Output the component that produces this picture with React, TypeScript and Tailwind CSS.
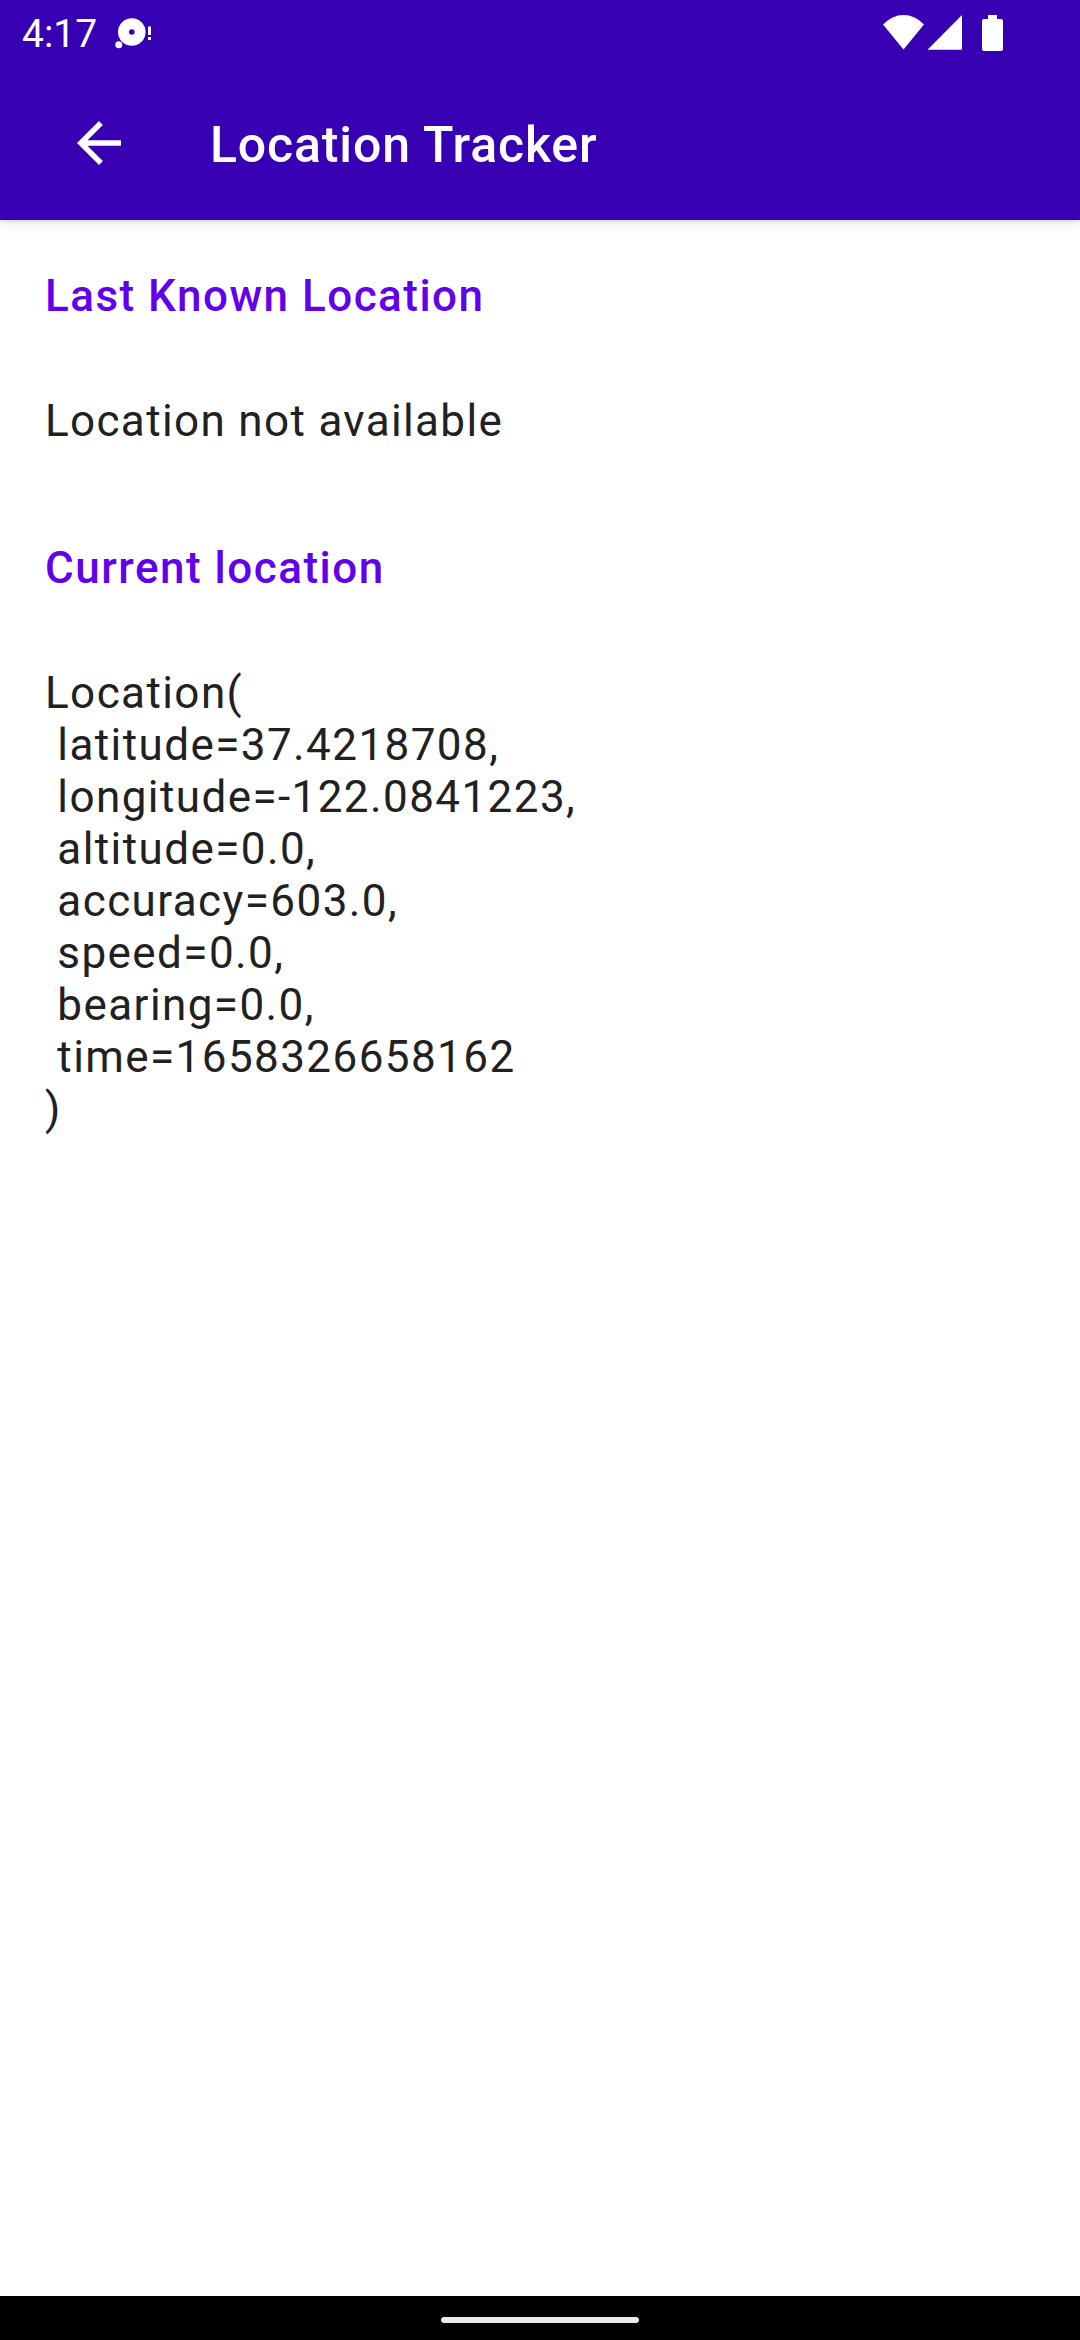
function StatusBar() {
  return (
    <div className="flex h-[66px] items-center justify-between pl-[22px] pr-[77px]">
      <div className="flex items-center">
        <span className="w-[92px] pt-[3px] text-[39px] leading-[63px]">4:17</span>
        <svg width="38" height="66" viewBox="114 0 38 66" fill="currentColor">
          <circle cx="131.8" cy="32" r="8.3" fill="none" stroke="currentColor" strokeWidth="11" />
          <circle cx="118.8" cy="44.7" r="3.5" />
          <path d="M148 26.500h3v8.500h-3zM148 37h3v3h-3z" />
        </svg>
      </div>
      <svg width="120" height="66" viewBox="883 0 120 66" fill="currentColor">
        <path d="M903.500 49.500L883 24.500Q892 15 903.500 15T924 24.500z" />
        <path d="M927.500 49.700L962 15V49.700z" />
        <path d="M988 15h9v4h4a2 2 0 0 1 2 2v28a2 2 0 0 1-2 2h-17a2 2 0 0 1-2-2V21a2 2 0 0 1 2-2h4z" />
      </svg>
    </div>
  );
}

const currentLocation = `Location(
 latitude=37.4218708,
 longitude=-122.0841223,
 altitude=0.0,
 accuracy=603.0,
 speed=0.0,
 bearing=0.0,
 time=1658326658162
)`;

export default function App() {
  return (
    <div className="flex h-[2340px] w-[1080px] flex-col overflow-hidden bg-white font-['Roboto',sans-serif] text-[#212121]">
      <header className="h-[220px] shrink-0 bg-[#3700b3] text-white shadow-[0_1px_5px_rgba(0,0,0,0.16),0_5px_14px_rgba(0,0,0,0.06)]">
        <StatusBar />
        <div className="flex h-[154px] items-center">
          <button className="ml-[66px]" aria-label="Back">
            <svg width="66" height="66" viewBox="0 0 24 24" fill="currentColor">
              <path d="M20 11H7.83l5.590-5.590L12 4l-8 8 8 8 1.410-1.410L7.830 13H20v-2z" />
            </svg>
          </button>
          <h1 className="ml-[78px] mt-[4px] text-[50px] font-medium leading-[66px] tracking-[0.85px]">Location Tracker</h1>
        </div>
      </header>
      <main className="flex grow flex-col px-[45px] pt-[50px] text-[44px] leading-[52px] tracking-[1.375px]">
        <h2 className="font-medium tracking-[1.475px] text-[#6200ee]">Last Known Location</h2>
        <p className="mt-[73px] tracking-[1.35px]">Location not available</p>
        <h2 className="mt-[95px] font-medium tracking-[1.5px] text-[#6200ee]">Current location</h2>
        <p className="mt-[73px] whitespace-pre tracking-[1.42px]">{currentLocation}</p>
      </main>
      <footer className="flex h-[44px] shrink-0 justify-center bg-black pt-[21px]">
        <div className="h-[6px] w-[198px] rounded-full bg-[#ebebeb]" />
      </footer>
    </div>
  );
}
